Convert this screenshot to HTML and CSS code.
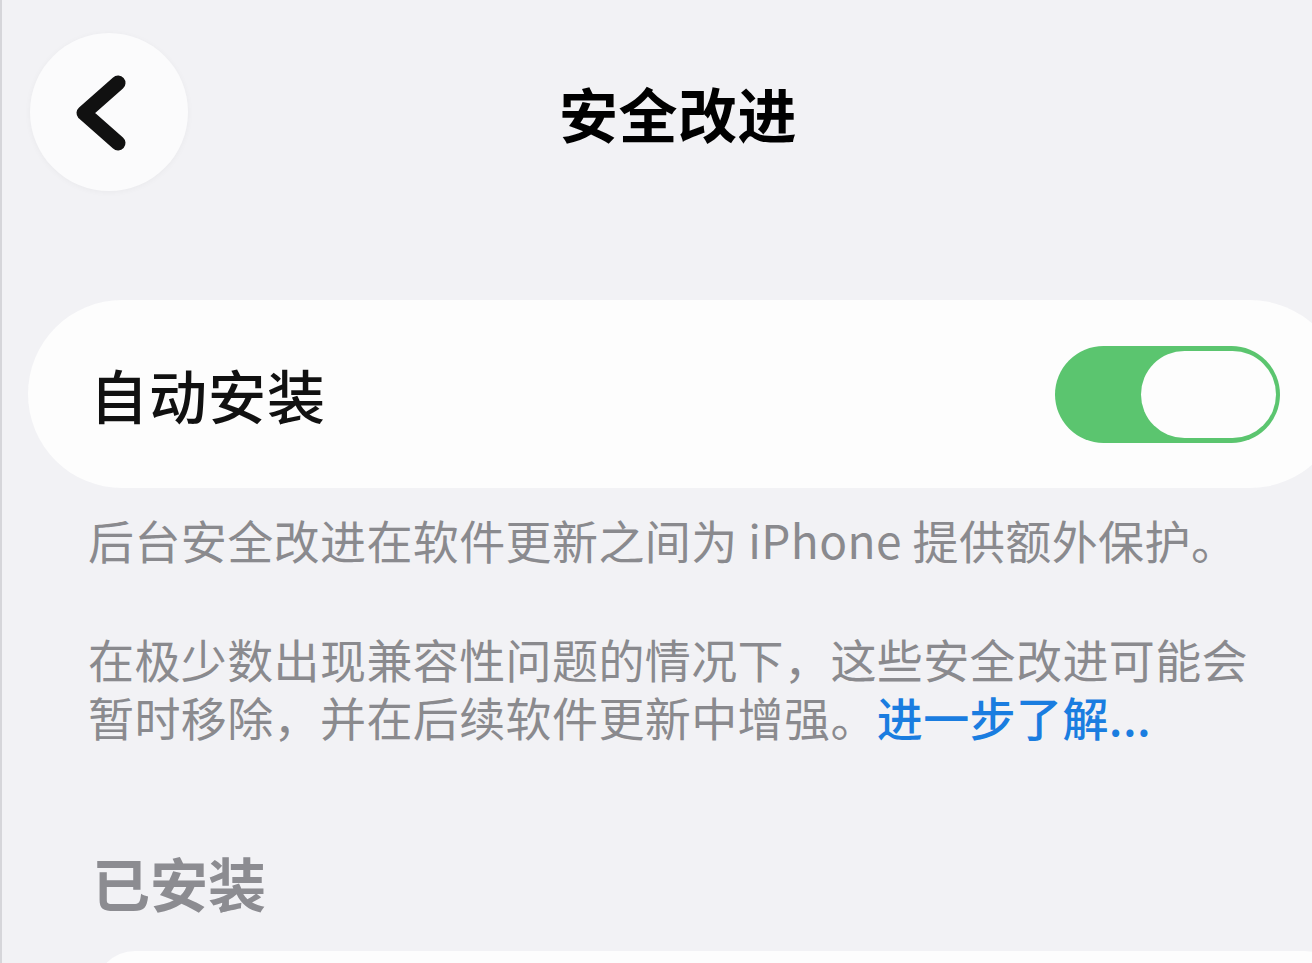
FILE: index.html
```html
<!DOCTYPE html>
<html lang="zh-CN">
<head>
    <meta charset="UTF-8">
    <meta name="viewport" content="width=device-width, initial-scale=1.0">
    <title>安全改进</title>
    <link rel="stylesheet" href="styles.css">
</head>
<body>
    <div class="screen">
        <div class="nav-bar">
            <button class="back-button" aria-label="返回">
                <svg width="158" height="158" viewBox="0 0 158 158">
                    <path d="M88 50 L54 80 L88 110" fill="none" stroke="#111" stroke-width="15" stroke-linecap="round" stroke-linejoin="round"/>
                </svg>
            </button>
            <h1 class="nav-title">安全改进</h1>
        </div>

        <div class="settings-card">
            <span class="setting-label">自动安装</span>
            <div class="switch on">
                <div class="switch-knob"></div>
            </div>
        </div>

        <div class="footer-note">
            <p class="note-text">后台安全改进在软件更新之间为 iPhone 提供额外保护。</p>
            <p class="note-text">在极少数出现兼容性问题的情况下，这些安全改进可能会暂时移除，并在后续软件更新中增强。<a class="note-link" href="#">进一步了解...</a></p>
        </div>

        <h2 class="section-header">已安装</h2>

        <div class="installed-card"></div>
    </div>
</body>
</html>
```

FILE: styles.css
```css
body {
    margin: 0;
    background-color: #f2f2f5;
    font-family: "Noto Sans CJK SC", "Noto Sans", sans-serif;
    overflow: hidden;
}

.screen {
    height: 963px;
    overflow: hidden;
    border-left: 2px solid #d6d6da;
    box-sizing: border-box;
}

.nav-bar {
    display: flex;
    align-items: center;
    padding: 33px 0 0 28px;
}

.back-button {
    width: 158px;
    height: 158px;
    padding: 0;
    border: none;
    border-radius: 50%;
    background-color: #fbfbfc;
    box-shadow: 0 1px 6px rgba(0, 0, 0, 0.04);
    display: flex;
    align-items: center;
    justify-content: center;
}

.nav-title {
    margin: 0 0 0 371px;
    font-size: 59px;
    font-weight: 700;
    color: #000;
    line-height: 1;
    letter-spacing: 0.5px;
}

.settings-card {
    display: flex;
    align-items: center;
    justify-content: space-between;
    height: 188px;
    margin: 109px -32px 0 26px;
    padding: 0 64px 0 62px;
    border-radius: 94px;
    background-color: #fdfdfd;
}

.setting-label {
    font-size: 58px;
    font-weight: 500;
    color: #111;
    letter-spacing: 1px;
}

.switch {
    width: 225px;
    height: 97px;
    border-radius: 49px;
    background-color: #5bc56f;
    display: flex;
    align-items: center;
    box-sizing: border-box;
    padding: 0 4px;
}

.switch-knob {
    width: 135px;
    height: 87px;
    margin-left: auto;
    border-radius: 44px;
    background-color: #fdfdfd;
}

.footer-note {
    padding: 22px 40px 0 86px;
}

.note-text {
    margin: 0 0 61px;
    font-size: 46px;
    line-height: 58px;
    color: #8a8a8e;
    letter-spacing: 0.4px;
}

.note-text:last-child {
    margin-bottom: 0;
}

.note-link {
    color: #1a7de0;
    font-weight: 500;
    text-decoration: none;
}

.section-header {
    margin: 108px 0 0 90px;
    font-size: 58px;
    font-weight: 700;
    color: #8c8c91;
    line-height: 1;
}

.installed-card {
    height: 120px;
    margin: 40px -32px 0 93px;
    border-radius: 40px;
    background-color: #fdfdfd;
}
```
